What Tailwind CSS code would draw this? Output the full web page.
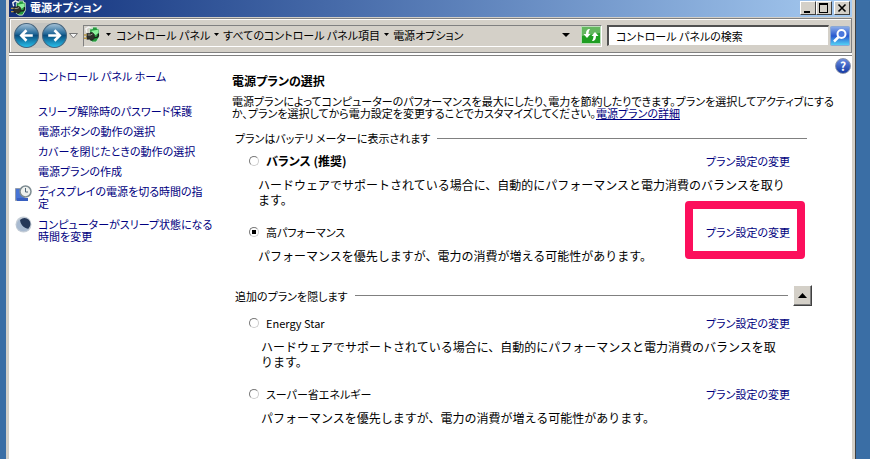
<!DOCTYPE html>
<html lang="ja">
<head>
    <meta charset="UTF-8">
    <meta name="viewport" content="width=device-width, initial-scale=1.0">
    <title>電源オプション</title>
    <script src="https://cdn.jsdelivr.net/npm/@tailwindcss/browser@4"></script>
</head>
<body class="bg-[#3a6ea5] text-black text-[11px] leading-[12px] font-['Noto_Sans_CJK_JP',sans-serif] [font-feature-settings:'palt'] min-h-screen pl-[6px] pr-[15px]">
    <!-- Shared icon -->
    <svg class="hidden">
        <symbol id="power-icon" viewBox="0 0 18 18">
            <path d="M3 7L2 3l3-2 4 2" fill="none" stroke="#f4f4f4" stroke-width="1.5" />
            <path d="M9 1h5v2h2v9l-3 5H9l-3-2V3h3z" fill="#259a3d" stroke="#d4e6d4" />
            <path d="M8 5l7-1v4l-7 4z" fill="#8cf09b" />
            <path d="M3 8h3l1-1h2l2 2v4l-2 2H7l-1-1H3z" fill="#2e302a" stroke="#111" stroke-width=".6" />
            <path d="M4 9.500h3l2-1" fill="none" stroke="#a3a59c" />
            <path d="M0 9.500h3M0 13h3" stroke="#b89844" stroke-width="1.5" />
            <path d="M11 12c3 1 5-1 4-4" fill="none" stroke="#1b1b1b" stroke-width="1.5" />
        </symbol>
    </svg>

    <div class="min-h-screen flex flex-col bg-white border-x-[3px] border-l-[#d4d0c8] border-r-[#d4d0c8] shadow-[1px_0_0_#404040]">
        <!-- Title bar -->
        <header class="h-[18px] flex items-start border-b border-[#d4d0c8] bg-linear-to-r from-[#12307c] to-[#a6caf0] pl-[2px] pr-[2px]">
            <svg class="size-4 shrink-0"><use href="#power-icon" /></svg>
            <h1 class="ml-[3px] mt-px grow text-white font-bold">電源オプション</h1>
            <div class="mt-px flex">
                <button aria-label="最小化" class="w-4 h-[14px] bg-[#d4d0c8] border border-t-white border-l-white border-r-[#404040] border-b-[#404040]">
                    <svg class="w-[14px] h-3" viewBox="0 0 14 12"><path d="M3 9h6v2H3z" /></svg>
                </button>
                <button aria-label="最大化" class="w-4 h-[14px] bg-[#d4d0c8] border border-t-white border-l-white border-r-[#404040] border-b-[#404040]">
                    <svg class="w-[14px] h-3" viewBox="0 0 14 12"><path d="M2 1h9v10H2zM3 3v7h7V3z" fill-rule="evenodd" /></svg>
                </button>
                <button aria-label="閉じる" class="ml-[2px] w-4 h-[14px] bg-[#d4d0c8] border border-t-white border-l-white border-r-[#404040] border-b-[#404040]">
                    <svg class="w-[14px] h-3" viewBox="0 0 14 12"><path d="M3.500 2.500l7 7m0-7l-7 7" stroke="#000" stroke-width="1.600" /></svg>
                </button>
            </div>
        </header>

        <!-- Navigation -->
        <nav class="h-[35px] flex items-center bg-[#d4d0c8] border border-[#808080] shadow-[inset_1px_1px_0_#fff] pl-1">
            <div class="flex items-center gap-[3px] rounded-full bg-[#c6c5c1]">
                <button aria-label="戻る" class="size-[25px]">
                    <svg class="size-[25px]" viewBox="0 0 24 24">
                        <defs>
                            <linearGradient id="orb" x1="0" y1="0" x2="0" y2="1">
                                <stop offset="0" stop-color="#a9c4d8" />
                                <stop offset=".4" stop-color="#2b6f9f" />
                                <stop offset=".5" stop-color="#0b4f80" />
                                <stop offset="1" stop-color="#27c2ee" />
                            </linearGradient>
                        </defs>
                        <circle cx="12" cy="12" r="11.500" fill="url(#orb)" stroke="#48657d" />
                        <path d="M18 12H7m5-5l-5 5 5 5" fill="none" stroke="#fff" stroke-width="2.500" />
                    </svg>
                </button>
                <button aria-label="進む" class="size-[25px]">
                    <svg class="size-[25px]" viewBox="0 0 24 24">
                        <circle cx="12" cy="12" r="11.500" fill="url(#orb)" stroke="#48657d" />
                        <path d="M6 12h11m-5-5l5 5-5 5" fill="none" stroke="#fff" stroke-width="2.500" />
                    </svg>
                </button>
            </div>
            <button aria-label="最近のページ" class="ml-[2px] w-[9px]">
                <svg class="w-[9px] h-[6px]" viewBox="0 0 9 6"><path d="M.5.500h8l-4 4.500z" fill="#f4f4f4" stroke="#777" /></svg>
            </button>
            <div class="ml-[5px] grow h-[22px] flex items-center border border-t-[#808080] border-l-[#808080] border-r-white border-b-white pb-[2px]">
                <svg class="size-[17px] shrink-0"><use href="#power-icon" /></svg>
                <svg class="ml-[5px] w-[5px] h-[3px]" viewBox="0 0 5 3"><path d="M0 0h5L2.500 3z" /></svg>
                <a href="#" class="ml-[5px]">コントロール パネル</a>
                <svg class="ml-1 w-[5px] h-[3px]" viewBox="0 0 5 3"><path d="M0 0h5L2.500 3z" /></svg>
                <a href="#" class="ml-1">すべてのコントロール パネル項目</a>
                <svg class="ml-1 w-[5px] h-[3px]" viewBox="0 0 5 3"><path d="M0 0h5L2.500 3z" /></svg>
                <a href="#" class="ml-1">電源オプション</a>
                <button aria-label="履歴" class="ml-auto mr-[11px]">
                    <svg class="w-2 h-1" viewBox="0 0 8 4"><path d="M0 0h8L4 4z" /></svg>
                </button>
                <button aria-label="更新" class="w-5 h-[18px]">
                    <svg class="w-5 h-[18px]" viewBox="0 0 20 18">
                        <path d="M.5.500h19v17H.5z" fill="#1f9e22" stroke="#b7ddb5" />
                        <path d="M1 1h18v6L1 10z" fill="#63b75f" />
                        <path d="M9 3c-3 0-4 2-4 5H2.500L6 12l3.500-4H7.500c0-2 .5-3 1.500-5z" fill="#fff" />
                        <path d="M11 15c3 0 4-2 4-5h2.500L14 6l-3.500 4h2c0 2-.5 3-1.500 5z" fill="#fff" />
                    </svg>
                </button>
            </div>
            <input type="search" aria-label="コントロール パネルの検索" placeholder="コントロール パネルの検索" class="ml-[5px] w-[222px] h-[21px] pl-[7px] bg-white border-t-2 border-l-2 border-r border-b border-t-[#505050] border-l-[#505050] border-r-[#d4d0c8] border-b-[#d4d0c8] placeholder:text-black [font-feature-settings:inherit]">
            <button aria-label="検索" class="ml-[1px] mr-[1px] size-5">
                <svg class="size-5" viewBox="0 0 20 20">
                    <defs>
                        <linearGradient id="find" x1="0" y1="0" x2="0" y2="1">
                            <stop offset="0" stop-color="#8eaee9" />
                            <stop offset=".5" stop-color="#2859cf" />
                            <stop offset="1" stop-color="#58d8f7" />
                        </linearGradient>
                    </defs>
                    <rect x=".5" y=".5" width="19" height="19" rx="1" fill="url(#find)" stroke="#8ba9d4" />
                    <circle cx="11.500" cy="8" r="4" fill="#4b78dc" stroke="#fff" stroke-width="2" />
                    <path d="M8.500 11L4 15.500" stroke="#fff" stroke-width="2.500" />
                </svg>
            </button>
        </nav>

        <div class="grow flex mt-[2px] border-t border-[#808080]">
            <!-- Tasks -->
            <aside class="w-[223px] shrink-0 pl-[6px] pr-2 pt-[14px] text-[#000080]">
                <a href="#" class="block ml-[23px]">コントロール パネル ホーム</a>
                <ul class="mt-[23px] ml-[23px] space-y-2">
                    <li><a href="#">スリープ解除時のパスワード保護</a></li>
                    <li><a href="#">電源ボタンの動作の選択</a></li>
                    <li><a href="#">カバーを閉じたときの動作の選択</a></li>
                    <li><a href="#">電源プランの作成</a></li>
                </ul>
                <div class="mt-2 flex gap-[6px]">
                    <svg class="size-[17px] shrink-0" viewBox="0 0 17 17">
                        <path d="M.5 3.500h9v12h-9z" fill="#4774d5" stroke="#929cad" />
                        <path d="M2 13h11v3H2z" fill="#375fc0" />
                        <circle cx="10.500" cy="6.500" r="5.500" fill="#eef1ee" stroke="#7d8b91" stroke-width="1.500" />
                        <path d="M10.500 3v4H13" fill="none" stroke="#526777" />
                    </svg>
                    <a href="#">ディスプレイの電源を切る時間の指<br>定</a>
                </div>
                <div class="mt-[7px] flex gap-[6px]">
                    <svg class="size-[17px] shrink-0" viewBox="0 0 17 17">
                        <circle cx="8.500" cy="8.500" r="8" fill="#c4cdd7" />
                        <circle cx="9.500" cy="8" r="6" fill="#263959" />
                        <path d="M5 3c0 5 3 9 9 10-3 3-8 3-11 0S2 5 5 3z" fill="#a8bad0" />
                    </svg>
                    <a href="#" class="mt-[2px]">コンピューターがスリープ状態になる<br>時間を変更</a>
                </div>
            </aside>

            <!-- Plans -->
            <main class="grow min-w-0 pt-[19px]">
                <h2 class="text-[12px] leading-[12px] font-bold">電源プランの選択</h2>
                <p class="mt-2 mr-3">電源プランによってコンピューターのパフォーマンスを最大にしたり、電力を節約したりできます。プランを選択してアクティブにする<br>か、プランを選択してから電力設定を変更することでカスタマイズしてください。<a href="#" class="text-[#000080] underline">電源プランの詳細</a></p>

                <div class="mt-[13px] ml-[3px] mr-[45px] flex items-center gap-[7px]">
                    <h3>プランはバッテリ メーターに表示されます</h3>
                    <div class="grow h-px bg-[#808080]"></div>
                </div>

                <section class="mt-[11px] ml-[17px] mr-[62px]">
                    <div class="flex items-center">
                        <input type="radio" name="plan" id="balanced" class="appearance-none size-[10px] rounded-full bg-white border border-t-[#777] border-l-[#777] border-r-[#ccc] border-b-[#ccc] checked:bg-[radial-gradient(#000_40%,#fff_45%)]">
                        <label for="balanced" class="ml-[7px] grow text-[12px] leading-[12px] font-bold">バランス (推奨)</label>
                        <a href="#" class="text-[#000080]">プラン設定の変更</a>
                    </div>
                    <p class="mt-[10px] ml-[9px] text-[12px] leading-[15px] [font-feature-settings:normal]">ハードウェアでサポートされている場合に、自動的にパフォーマンスと電力消費のバランスを取ります。</p>
                </section>

                <section class="mt-[19px] ml-[17px] mr-[62px]">
                    <div class="flex items-center">
                        <input type="radio" name="plan" id="high" checked class="appearance-none size-[10px] rounded-full bg-white border border-t-[#777] border-l-[#777] border-r-[#ccc] border-b-[#ccc] checked:bg-[radial-gradient(#000_40%,#fff_45%)]">
                        <label for="high" class="ml-[7px] grow">高パフォーマンス</label>
                        <a href="#" class="relative text-[#000080]">プラン設定の変更
                            <span class="absolute -top-[25px] -bottom-[21px] -left-[21px] -right-[15px] border-8 border-[#fc0f5c] rounded-[4px]"></span>
                        </a>
                    </div>
                    <p class="mt-[10px] ml-[9px] text-[12px] leading-[15px] [font-feature-settings:normal]">パフォーマンスを優先しますが、電力の消費が増える可能性があります。</p>
                </section>

                <div class="mt-[22px] ml-[3px] mr-10 flex items-center">
                    <h3>追加のプランを隠します</h3>
                    <div class="ml-[7px] grow h-px bg-[#808080]"></div>
                    <button aria-label="折りたたむ" class="ml-[5px] w-[19px] h-[21px] flex items-center justify-center bg-[#d4d0c8] border border-t-white border-l-white border-r-[#404040] border-b-[#404040] shadow-[inset_-1px_-1px_0_#808080]">
                        <svg class="w-[9px] h-[5px]" viewBox="0 0 9 5"><path d="M0 5h9L4.500 0z" /></svg>
                    </button>
                </div>

                <section class="mt-[11px] ml-[17px] mr-[62px]">
                    <div class="flex items-center">
                        <input type="radio" name="plan" id="energy-star" class="appearance-none size-[10px] rounded-full bg-white border border-t-[#777] border-l-[#777] border-r-[#ccc] border-b-[#ccc] checked:bg-[radial-gradient(#000_40%,#fff_45%)]">
                        <label for="energy-star" class="ml-[7px] grow">Energy Star</label>
                        <a href="#" class="text-[#000080]">プラン設定の変更</a>
                    </div>
                    <p class="mt-[10px] ml-3 mr-1 text-[12px] leading-[15px] [font-feature-settings:normal]">ハードウェアでサポートされている場合に、自動的にパフォーマンスと電力消費のバランスを取ります。</p>
                </section>

                <section class="mt-[19px] ml-[17px] mr-[62px]">
                    <div class="flex items-center">
                        <input type="radio" name="plan" id="super-saver" class="appearance-none size-[10px] rounded-full bg-white border border-t-[#777] border-l-[#777] border-r-[#ccc] border-b-[#ccc] checked:bg-[radial-gradient(#000_40%,#fff_45%)]">
                        <label for="super-saver" class="ml-[7px] grow">スーパー省エネルギー</label>
                        <a href="#" class="text-[#000080]">プラン設定の変更</a>
                    </div>
                    <p class="mt-[10px] ml-3 text-[12px] leading-[15px] [font-feature-settings:normal]">パフォーマンスを優先しますが、電力の消費が増える可能性があります。</p>
                </section>
            </main>

            <!-- Help -->
            <div class="w-0">
                <button aria-label="ヘルプ" class="-ml-[17px] mt-[2px] size-4 rounded-full bg-linear-to-b from-[#6a8be0] to-[#1439a5] border border-[#8a93ab] text-white font-bold text-[12px] leading-[12px]">?</button>
            </div>
        </div>
    </div>
</body>
</html>
